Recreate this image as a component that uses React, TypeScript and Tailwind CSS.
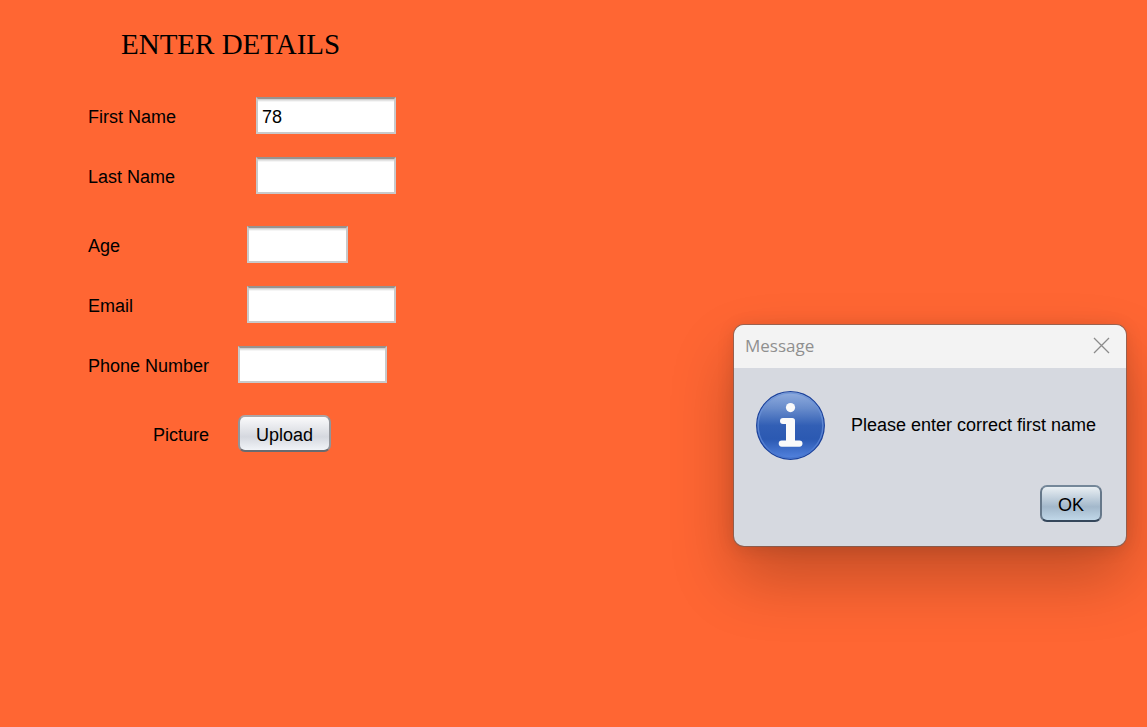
import { useState } from "react";

type Field = {
  id: string;
  label: string;
  initial: string;
  rowClass: string;
  labelClass: string;
  inputClass: string;
};

const fields: Field[] = [
  { id: "first-name", label: "First Name", initial: "78", rowClass: "", labelClass: "w-[168px]", inputClass: "w-[140px]" },
  { id: "last-name", label: "Last Name", initial: "", rowClass: "mt-[23px]", labelClass: "w-[168px]", inputClass: "w-[140px]" },
  { id: "age", label: "Age", initial: "", rowClass: "mt-8", labelClass: "w-[159px]", inputClass: "w-[101px]" },
  { id: "email", label: "Email", initial: "", rowClass: "mt-[23px]", labelClass: "w-[159px]", inputClass: "w-[149px]" },
  { id: "phone", label: "Phone Number", initial: "", rowClass: "mt-[23px]", labelClass: "w-[150px]", inputClass: "w-[149px]" },
];

function TextField({ field }: { field: Field }) {
  const [value, setValue] = useState(field.initial);
  return (
    <div className={`flex items-center ${field.rowClass}`}>
      <label htmlFor={field.id} className={`shrink-0 pt-[3px] ${field.labelClass}`}>
        {field.label}
      </label>
      <input
        id={field.id}
        type="text"
        value={value}
        onChange={(e) => setValue(e.target.value)}
        className={`h-[37px] border-2 border-[#c9c9ca] border-t-[#98928f] bg-white px-1 pt-1 shadow-[inset_0_1px_0_#d0d0d0,inset_0_2px_0_#e4e4e4,inset_0_3px_0_#f5f5f5] outline-none ${field.inputClass}`}
      />
    </div>
  );
}

function InfoIcon() {
  return (
    <svg viewBox="0 0 70 70" className="size-[70px] shrink-0" aria-hidden="true">
      <defs>
        <linearGradient id="info-fill" x1="0" y1="0" x2="0" y2="1">
          <stop offset="0" stopColor="#92aedf" />
          <stop offset="0.25" stopColor="#678bcb" />
          <stop offset="0.5" stopColor="#325fb5" />
          <stop offset="0.7" stopColor="#2b59b2" />
          <stop offset="1" stopColor="#5484e0" />
        </linearGradient>
        <linearGradient id="info-rim" x1="0" y1="0" x2="0" y2="1">
          <stop offset="0" stopColor="#7297d7" />
          <stop offset="1" stopColor="#4775cd" />
        </linearGradient>
      </defs>
      <circle cx="34.5" cy="34.5" r="33.8" fill="url(#info-fill)" stroke="#1c429b" strokeWidth="1.3" />
      <circle cx="34.5" cy="34.5" r="32.4" fill="none" stroke="url(#info-rim)" strokeWidth="1.4" />
      <circle cx="34.5" cy="16.6" r="4.6" fill="#fafafa" />
      <path
        d="M27 27H36.2Q39 27 39 29.8V49.5H43.4A3.1 3.1 0 0 1 43.4 55.7H25.8A3.1 3.1 0 0 1 25.8 49.5H30V33H27A3 3 0 0 1 27 27Z"
        fill="#fafafa"
      />
    </svg>
  );
}

function MessageDialog({ onClose }: { onClose: () => void }) {
  return (
    <section
      role="dialog"
      aria-labelledby="dialog-title"
      className="absolute top-[325px] right-[21px] w-[392px] rounded-[10px] bg-[#d6d9e0] shadow-[0_0_0_1px_rgba(100,100,100,0.6),0_2px_18px_rgba(0,0,0,0.12),0_32px_64px_rgba(0,0,0,0.24)]"
    >
      <header className="flex h-[43px] items-center justify-between rounded-t-[10px] bg-[#f3f3f3] pr-4 pb-0.5 pl-[11px]">
        <h2 id="dialog-title" className="font-['Open_Sans','Noto_Sans',sans-serif] text-[17px] leading-6 text-[#8f8f8f]">
          Message
        </h2>
        <button type="button" aria-label="Close" onClick={onClose} className="size-[17px]">
          <svg viewBox="0 0 17 17" className="size-[17px]" fill="none" stroke="#8b8b8b" strokeWidth="1.3" aria-hidden="true">
            <path d="M1 1L16 16M16 1L1 16" />
          </svg>
        </button>
      </header>
      <div className="px-[22px] pt-[23px] pb-6">
        <div className="flex items-center gap-[25px]">
          <InfoIcon />
          <p className="pb-0.5 whitespace-nowrap">Please enter correct first name</p>
        </div>
        <div className="mt-6 flex justify-end pr-0.5">
          <button
            type="button"
            onClick={onClose}
            className="h-[37px] w-[62px] rounded-[7px] border-2 border-[#66788a] border-t-[#748799] border-b-[#35475b] bg-linear-to-b from-[#e9eff3] via-[#a3b8cb] via-60% to-[#c0d7e8] pt-0.5"
          >
            OK
          </button>
        </div>
      </div>
    </section>
  );
}

export default function App() {
  const [open, setOpen] = useState(true);
  return (
    <main className="relative min-h-screen bg-[#ff6633] font-['Liberation_Sans',Arial,sans-serif] text-lg leading-6 text-black">
      <form className="px-[88px] pt-6" onSubmit={(e) => e.preventDefault()}>
        <h1 className="mb-[33px] pl-[33px] font-['Liberation_Serif',serif] text-[29px] leading-10">
          ENTER DETAILS
        </h1>
        {fields.map((field) => (
          <TextField key={field.id} field={field} />
        ))}
        <div className="mt-8 flex items-center">
          <span id="picture-label" className="w-[150px] pt-[3px] pl-[65px]">
            Picture
          </span>
          <button
            id="upload"
            type="button"
            aria-labelledby="picture-label upload"
            className="h-[37px] w-[93px] rounded-[7px] border-2 border-[#929499] border-t-[#aaa6a8] border-b-[#696b70] bg-linear-to-b from-[#fafafb] via-[#d5d8df] via-60% to-[#f1f4f8] pt-0.5"
          >
            Upload
          </button>
        </div>
      </form>
      {open && <MessageDialog onClose={() => setOpen(false)} />}
    </main>
  );
}
